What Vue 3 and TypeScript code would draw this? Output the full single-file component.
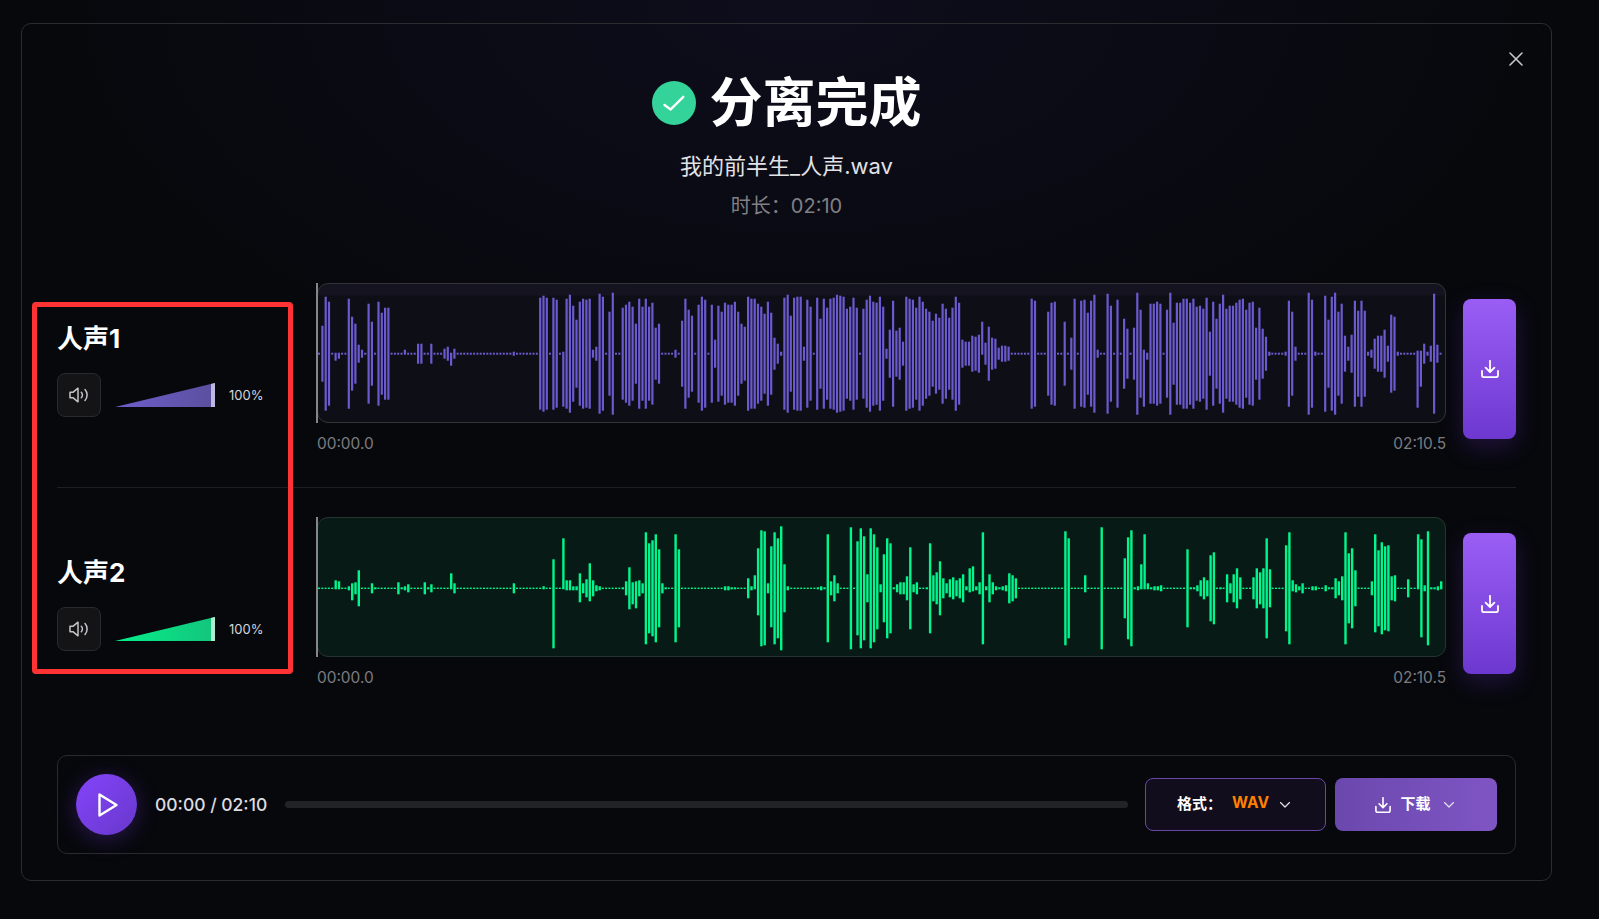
<script setup lang="ts">
interface Bar {
  x: number
  y: number
  w: number
  h: number
}

interface Track {
  name: string
  kind: string
  center: number
  barWidth: number
  dotHeight: number
  segments: { start: number; data: string }[]
}

const step = 3.3

// tokens: "0x5" = five dots, "12" = 12px either side, "3/40" = 3px up and 40px down
const tracks: Track[] = [
  {
    name: '人声1',
    kind: 'purple',
    center: 70.7,
    barWidth: 2.2,
    dotHeight: 2,
    segments: [
      {
        start: 319,
        data: '0 28 57 52 0 0/7 0/5 0 0 55 37 30 9 4 1 50 32 0 52 41 46 46 0x4 4/0 0x3 10 10 0 0 10 0x3 5 7 0/12 5 0x17 2 0x7 56 58 56 0 56 54 0 2/53 55 59 48 34 52 55 54 55 4 7 60 57 0 42 61 0 0 46 49 52 47 30 55 47 55 47 51 26 30 0x4 4 0 33 55 44 38 0 49 57 54 0 49 14 48 42 51 49 49 52 42 30 27 57 55 55 50 47 40 52 41 16 10 2 56 59',
      },
      {
        start: 790.7,
        data: '38 56 57 57 7 54 47 0 56 35 55 46 55 56 59 58 57 45 47 56 46 0 45 54 58 52 51 57 47 5 24 53 23 26 12 57 55 54 46 57 52 45 42 33 40 36 50 45 36 46 57 51 14 12 12 18 17 19 32/1 11 27 16 15 6 8 8 7 0x6 55 53 0x3 42 51 52 0 0 32 0 16 55 0 53 54 41 53 59 4 0 0 60 48 0 54 0 35 25 0 26 61 44 4/53 0/6 50 50 52 50 0 44 61 31 51 51 55 55 51 55 47 48 45 56 22 52 35 50 59 45 48 48 51 54 55 44 51 52 26 46 25 17 2',
      },
      {
        start: 1272.3,
        data: '0x4 2 53 42 7 0x3 61 54 2 0 0 58 34 57 61 42 50 18 7 19 53 43 53 43 2 4 15 18 18 24 8 39 37 2 0x5 3/54 3/33 10 2 8 60 9 0',
      },
    ],
  },
  {
    name: '人声2',
    kind: 'green',
    center: 71.3,
    barWidth: 2.4,
    dotHeight: 1.4,
    segments: [
      {
        start: 319,
        data: '0x5 8/0 7/0 0 0 2 5/12 6 18 0x3 5 1 0x6 6 1 2 4 0x4 6 1 4 0x5 15/0 5 0x17 5 0x8 2/0 0 0 29/60 0 0 50/0 8/2 8/2 2 2 15/14 5 9 25/13 8 3 2 0x6 1 7 21 6/16 7/20 8 5 56 45 48 54 39 5 1 0 0 54 39 0x13 2 2 1 1 0x3 10 2 13/0 40/27 58 57 5 42/39 56 50 62 24 2',
      },
      {
        start: 791.3,
        data: '0x8 1 2 1 54 7 13 5 0x3 61 0 47 60 52 14 60 54 41 4 34 50 45 1 4 6 6 12 41 4 6 0 0 1 45 13 16 27 10 5 9 11 8 10 14 2 20/4 22/3 2 6 56 2 14 6 2 1 2 3 15 13 10 0x14 57 50 0x4 13/4 0x4 61 0x6 30 51 58 1 2 24/0 54/0 5/0 1 2 2 3 0x7 39 1 1 3 8 11 8 33 36 0 1 0 14 5 14 20 11 0x3 11 20 16 20 50 19',
      },
      {
        start: 1272.7,
        data: '0x4 43 56 8/3 4 2 5 0 0 2 2 0 0 3 1 1 10 7 12 56 35 40 18 0x4 7 54/44 38 46 42 43 12 13 0x3 9 0 0 54/0 49 3 57 1 1 2 7/0',
      },
    ],
  },
]

function parseBars(track: Track): Bar[] {
  const bars: Bar[] = []
  for (const seg of track.segments) {
    let i = 0
    for (const token of seg.data.split(' ')) {
      const [val, rep] = token.split('x')
      const count = rep ? Number(rep) : 1
      const [upRaw, downRaw] = val.split('/')
      const up = Number(upRaw)
      const down = downRaw === undefined ? up : Number(downRaw)
      for (let n = 0; n < count; n++) {
        const x = seg.start + i * step - 318
        if (up === 0 && down === 0) {
          bars.push({ x, y: track.center - track.dotHeight / 2, w: 2, h: track.dotHeight })
        } else {
          const top = track.center - Math.max(up, 1)
          bars.push({ x, y: top, w: track.barWidth, h: Math.max(up, 1) + Math.max(down, 1) })
        }
        i++
      }
    }
  }
  return bars
}

const rows = tracks.map((t) => ({ ...t, bars: parseBars(t) }))
</script>

<template>
  <div class="page">
    <div class="modal">
      <svg class="close" width="14" height="14" viewBox="0 0 14 14">
        <path d="M1 1l12 12M13 1L1 13" />
      </svg>

      <div class="red-frame"></div>

      <header class="head">
        <div class="title-line">
          <svg class="ok-icon" width="44" height="44" viewBox="0 0 44 44">
            <circle cx="22" cy="22" r="22" fill="#34d399" />
            <path d="M12.5 24l6.2 4.4L31.3 15.8" />
          </svg>
          <h1>分离完成</h1>
        </div>
        <p class="file">我的前半生_人声.wav</p>
        <p class="length">时长：02:10</p>
      </header>

      <section class="tracks">
        <div v-for="row in rows" :key="row.name" class="track" :class="row.kind">
          <div class="label">
            <h2>{{ row.name }}</h2>
            <div class="volume">
              <button class="mute">
                <svg width="20" height="16" viewBox="0 0 20 16">
                  <path d="M1 5.2h3.2L9 1.2v13.6L4.2 10.8H1z" />
                  <path d="M12.3 5.3a3.8 3.8 0 0 1 0 5.4" />
                  <path d="M16 2.6a8 8 0 0 1 0 10.8" />
                </svg>
              </button>
              <div class="wedge"><span class="handle"></span></div>
              <span class="pct">100%</span>
            </div>
          </div>

          <div class="wave-col">
            <div class="wave">
              <svg class="bars" viewBox="0 0 1129 140" width="1129" height="140">
                <rect v-for="(b, i) in row.bars" :key="i" :x="b.x" :y="b.y" :width="b.w" :height="b.h" />
              </svg>
              <span class="playhead"></span>
            </div>
            <div class="times">
              <span>00:00.0</span>
              <span>02:10.5</span>
            </div>
          </div>

          <button class="save">
            <svg width="18" height="18" viewBox="0 0 18 18">
              <path d="M9 .8v11M4.6 7.6L9 12l4.4-4.4M1 10.8v4.4a2 2 0 0 0 2 2h12a2 2 0 0 0 2-2v-4.4" />
            </svg>
          </button>
        </div>
      </section>

      <footer class="player">
        <button class="play">
          <svg width="22" height="26" viewBox="0 0 22 26">
            <path d="M2.5 2.5v21L19.5 13z" />
          </svg>
        </button>
        <span class="clock">00:00 / 02:10</span>
        <div class="progress"></div>
        <button class="format">
          <span class="format-label">格式：</span>
          <span class="format-value">WAV</span>
          <svg class="chev" width="10" height="6" viewBox="0 0 10 6"><path d="M.5.5L5 5 9.500.5" /></svg>
        </button>
        <button class="download">
          <svg class="dl" width="16" height="16" viewBox="0 0 18 18">
            <path d="M9 .8v11M4.600 7.600L9 12l4.400-4.400M1 10.800v4.400a2 2 0 0 0 2 2h12a2 2 0 0 0 2-2v-4.400" />
          </svg>
          <span>下载</span>
          <svg class="chev" width="10" height="6" viewBox="0 0 10 6"><path d="M.5.5L5 5 9.500.5" /></svg>
        </button>
      </footer>
    </div>
  </div>
</template>

<style>
body {
  background: #07080c;
}
</style>

<style scoped>
.page {
  box-sizing: border-box;
  width: 1599px;
  height: 919px;
  padding: 23px 47px 0 21px;
  overflow: hidden;
  font-family: Inter, "Noto Sans CJK SC", sans-serif;
  color: #fff;
  background: radial-gradient(ellipse 760px 420px at 50% 0, #0e0d1c 0%, #0b0b15 45%, #07080c 100%);
}

.modal {
  position: relative;
  box-sizing: border-box;
  height: 858px;
  padding: 0 35px;
  border: 1px solid #2c2c30;
  border-radius: 10px;
}

.close {
  position: absolute;
  right: 28px;
  top: 28px;
}

.close path {
  fill: none;
  stroke: #c8c8cc;
  stroke-width: 1.6;
  stroke-linecap: round;
}

.red-frame {
  position: absolute;
  left: 10px;
  top: 278px;
  box-sizing: border-box;
  width: 261px;
  height: 372px;
  border: 5px solid #ff3333;
  border-radius: 4px;
  pointer-events: none;
}

.head {
  display: flex;
  flex-direction: column;
  align-items: center;
  padding-top: 49px;
}

.title-line {
  display: flex;
  align-items: center;
  gap: 14px;
  height: 60px;
}

.title-line h1 {
  margin: 0;
  font-size: 53px;
  line-height: 60px;
  font-weight: 700;
}

.ok-icon path {
  fill: none;
  stroke: #fff;
  stroke-width: 2.4;
  stroke-linecap: round;
  stroke-linejoin: round;
}

.file {
  margin: 19px 0 0;
  font-size: 22px;
  line-height: 28px;
  color: #e2e2e6;
}

.length {
  margin: 13px 0 0;
  font-size: 20px;
  line-height: 26px;
  color: #808085;
}

.tracks {
  margin-top: 64px;
}

.track {
  display: flex;
  gap: 17px;
}

.track.purple {
  padding-bottom: 33px;
  border-bottom: 1px solid #1f1f23;
}

.track.green {
  padding-top: 29px;
}

.label {
  display: flex;
  flex-direction: column;
  width: 243px;
  flex: none;
}

.purple .label {
  padding-top: 40px;
  gap: 18px;
}

.green .label {
  padding-top: 40px;
  gap: 18px;
}

.label h2 {
  margin: 0;
  font-size: 26px;
  line-height: 32px;
  font-weight: 700;
}

.volume {
  display: flex;
  align-items: center;
  gap: 14px;
}

.mute {
  display: flex;
  align-items: center;
  justify-content: center;
  box-sizing: border-box;
  width: 44px;
  height: 44px;
  padding: 0;
  background: #141417;
  border: 1px solid #2a2a2e;
  border-radius: 8px;
}

.mute path {
  fill: none;
  stroke: #c4c4c8;
  stroke-width: 1.5;
  stroke-linecap: round;
  stroke-linejoin: round;
}

.wedge {
  position: relative;
  width: 100px;
  height: 24px;
  clip-path: polygon(0 100%, 100% 0, 100% 100%);
}

.purple .wedge {
  background: linear-gradient(90deg, #6c5ecb, #5b4f9e);
}

.green .wedge {
  background: linear-gradient(90deg, #04f08a, #14c47c);
}

.handle {
  position: absolute;
  right: 0;
  top: 0;
  bottom: 0;
  width: 4px;
}

.purple .handle {
  background: #bcb8e0;
}

.green .handle {
  background: #aeeccf;
}

.pct {
  font-size: 13px;
  color: #d6d6da;
}

.wave-col {
  width: 1129px;
  flex: none;
}

.wave {
  position: relative;
  box-sizing: border-box;
  height: 140px;
  border: 1px solid #333338;
  border-radius: 11px;
  overflow: visible;
}

.purple .wave {
  background: linear-gradient(#14131f 0, #14131f 11px, #0e0e17 12px);
}

.green .wave {
  background: #081a15;
  border-color: #24352f;
}

.bars {
  position: absolute;
  left: -1px;
  top: -1px;
}

.purple rect {
  fill: #6a5acd;
}

.green rect {
  fill: #00f58c;
}

.playhead {
  position: absolute;
  left: -2px;
  top: -1px;
  bottom: -1px;
  width: 2px;
  background: #85858a;
}

.times {
  display: flex;
  justify-content: space-between;
  margin-top: 11px;
  font-size: 15.4px;
  line-height: 20px;
  color: #7c7c80;
}

.save {
  display: flex;
  align-items: center;
  justify-content: center;
  flex: none;
  align-self: flex-start;
  width: 53px;
  height: 140px;
  margin-top: 16px;
  padding: 0;
  border: none;
  border-radius: 8px;
  background: linear-gradient(#9a5ef5, #6d38d0);
  box-shadow: 0 8px 24px rgba(124, 58, 237, 0.22);
}

.green .save {
  height: 141px;
}

.save path,
.dl path {
  fill: none;
  stroke: #fff;
  stroke-width: 1.8;
  stroke-linecap: round;
  stroke-linejoin: round;
}

.player {
  display: flex;
  align-items: center;
  gap: 18px;
  box-sizing: border-box;
  height: 99px;
  margin-top: 67px;
  padding: 0 18px 0 18px;
  border: 1px solid #2a2a2e;
  border-radius: 10px;
}

.play {
  display: flex;
  align-items: center;
  justify-content: center;
  flex: none;
  width: 61px;
  height: 61px;
  padding: 0 0 0 3px;
  border: none;
  border-radius: 50%;
  background: linear-gradient(135deg, #8444fa, #6838cc);
  box-shadow: 0 4px 22px rgba(124, 58, 237, 0.3);
}

.play path {
  fill: none;
  stroke: #fff;
  stroke-width: 2.4;
  stroke-linejoin: round;
}

.clock {
  flex: none;
  font-size: 17.5px;
  font-weight: 500;
  color: #dcdce0;
}

.progress {
  flex: 1;
  height: 7px;
  border-radius: 4px;
  background: #222327;
}

.format,
.download {
  display: flex;
  align-items: center;
  justify-content: center;
  flex: none;
  box-sizing: border-box;
  height: 53px;
  border-radius: 8px;
  font-family: inherit;
  font-size: 15px;
  font-weight: 700;
  color: #fff;
}

.format {
  width: 181px;
  margin-left: -1px;
  padding: 0 4px 0 0;
  border: 1px solid #6b46a8;
  background: #120d1c;
}

.format-label {
  margin: 0 10px 4px 0;
}

.format-value {
  margin: 0 11px 4px 0;
  font-size: 15.5px;
  color: #ff8000;
}

.download {
  width: 162px;
  margin-left: -9px;
  padding: 0 3px 0 0;
  border: none;
  background: linear-gradient(90deg, #6b48ad, #7f55c4);
}

.download .dl {
  margin-right: 9px;
}

.download span {
  margin: 0 13px 4px 0;
}

.chev path {
  fill: none;
  stroke: #e0e0e4;
  stroke-width: 1.3;
  stroke-linecap: round;
  stroke-linejoin: round;
}
</style>
